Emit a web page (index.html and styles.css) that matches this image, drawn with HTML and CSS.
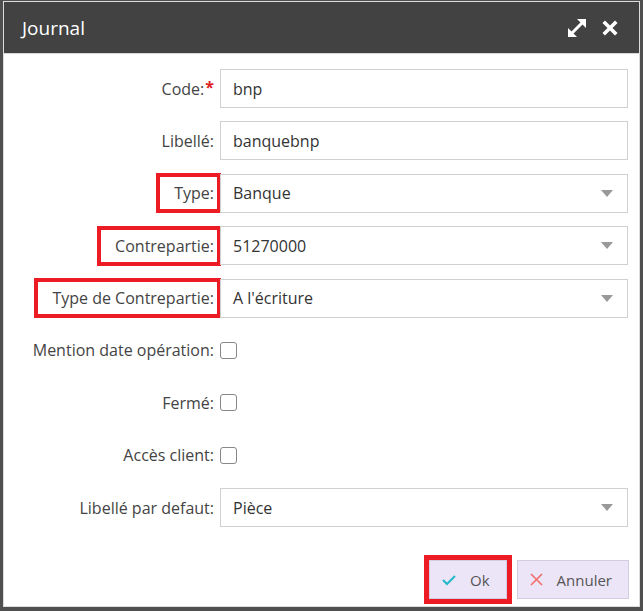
FILE: index.html
```html
<!DOCTYPE html>
<html lang="fr">
<head>
    <meta charset="UTF-8">
    <meta name="viewport" content="width=device-width, initial-scale=1.0">
    <title>Journal</title>
    <link rel="stylesheet" href="styles.css">
</head>
<body>
    <div class="window">
        <div class="window-header">
            <span class="window-title">Journal</span>
            <div class="window-tools">
                <svg class="tool" width="20" height="20" viewBox="0 0 20 20">
                    <line x1="5" y1="15" x2="15" y2="5" stroke="#fff" stroke-width="3"/>
                    <polygon points="10,1 19,1 19,10" fill="#fff"/>
                    <polygon points="1,10 1,19 10,19" fill="#fff"/>
                </svg>
                <svg class="tool" width="16" height="16" viewBox="0 0 16 16">
                    <path d="M3 3 L13 13 M13 3 L3 13" stroke="#fff" stroke-width="3.6" stroke-linecap="square"/>
                </svg>
            </div>
        </div>

        <div class="form">
            <label class="field-label">Code:<span class="required">*</span></label>
            <div class="input">bnp</div>

            <label class="field-label">Libellé:</label>
            <div class="input">banquebnp</div>

            <label class="field-label"><span class="mark">Type:</span></label>
            <div class="input select">Banque<span class="caret"></span></div>

            <label class="field-label"><span class="mark">Contrepartie:</span></label>
            <div class="input select">51270000<span class="caret"></span></div>

            <label class="field-label"><span class="mark">Type de Contrepartie:</span></label>
            <div class="input select">A l'écriture<span class="caret"></span></div>

            <label class="field-label">Mention date opération:</label>
            <div class="check-cell"><span class="checkbox"></span></div>

            <label class="field-label">Fermé:</label>
            <div class="check-cell"><span class="checkbox"></span></div>

            <label class="field-label">Accès client:</label>
            <div class="check-cell"><span class="checkbox"></span></div>

            <label class="field-label">Libellé par defaut:</label>
            <div class="input select">Pièce<span class="caret"></span></div>
        </div>

        <div class="footer">
            <button class="btn btn-ok">
                <svg width="14" height="12" viewBox="0 0 14 12">
                    <path d="M1 6 L5 10 L13 2" stroke="#22b8c9" stroke-width="2" fill="none"/>
                </svg>
                Ok
            </button>
            <button class="btn">
                <svg width="13" height="13" viewBox="0 0 13 13">
                    <path d="M1 1 L12 12 M12 1 L1 12" stroke="#f26c6c" stroke-width="1.6" fill="none"/>
                </svg>
                Annuler
            </button>
        </div>
    </div>
</body>
</html>
```

FILE: styles.css
```css
* {
    margin: 0;
    padding: 0;
    box-sizing: border-box;
    font-family: "Open Sans", "Liberation Sans", sans-serif;
}

body {
    background-color: #4f4f4f;
    width: 643px;
    height: 611px;
    overflow: hidden;
}

.window {
    margin: 1px 3px 0 3px;
    height: 606px;
    background-color: #fff;
    border: 1px solid #dcdcdc;
    display: flex;
    flex-direction: column;
}

.window-header {
    height: 52px;
    background-color: #424242;
    border-bottom: 1px solid #d8d8d8;
    display: flex;
    align-items: center;
    justify-content: space-between;
    padding: 0 21px 0 18px;
}

.window-title {
    color: #fff;
    font-size: 19px;
}

.window-tools {
    display: flex;
    align-items: center;
    gap: 15px;
}

.tool {
    display: block;
}

.form {
    display: grid;
    grid-template-columns: 210px 1fr;
    column-gap: 6px;
    row-gap: 13.4px;
    grid-auto-rows: 39px;
    padding: 15px 11px 0 0;
}

.field-label {
    display: flex;
    align-items: center;
    justify-content: flex-end;
    font-size: 16px;
    color: #444;
}

.required {
    color: #e0201c;
    font-weight: bold;
    position: relative;
    top: -2px;
    margin-left: 1px;
}

.mark {
    display: inline-block;
    line-height: 20px;
    padding: 6px 3px 6px 14px;
    margin-right: -3px;
    outline: 4px solid #ed1c24;
}

.input {
    border: 1px solid #d0d0d0;
    display: flex;
    align-items: center;
    padding: 0 14px 0 12px;
    font-size: 16px;
    color: #333;
}

.select {
    justify-content: space-between;
}

.caret {
    width: 0;
    height: 0;
    border-left: 6px solid transparent;
    border-right: 6px solid transparent;
    border-top: 7px solid #999;
}

.check-cell {
    display: flex;
    align-items: center;
}

.checkbox {
    width: 17px;
    height: 17px;
    border: 1px solid #888;
    border-radius: 3px;
    background-color: #fff;
}

.footer {
    margin-top: auto;
    display: flex;
    justify-content: flex-end;
    gap: 10px;
    padding: 0 10px 7px 0;
}

.btn {
    height: 39px;
    display: flex;
    align-items: center;
    gap: 14px;
    padding: 0 16px 0 12px;
    background-color: #ece5f8;
    border: 1px solid #d3cbe2;
    font-size: 15px;
    color: #555;
    cursor: pointer;
}

.btn-ok {
    outline: 5px solid #ed1c24;
}
```
